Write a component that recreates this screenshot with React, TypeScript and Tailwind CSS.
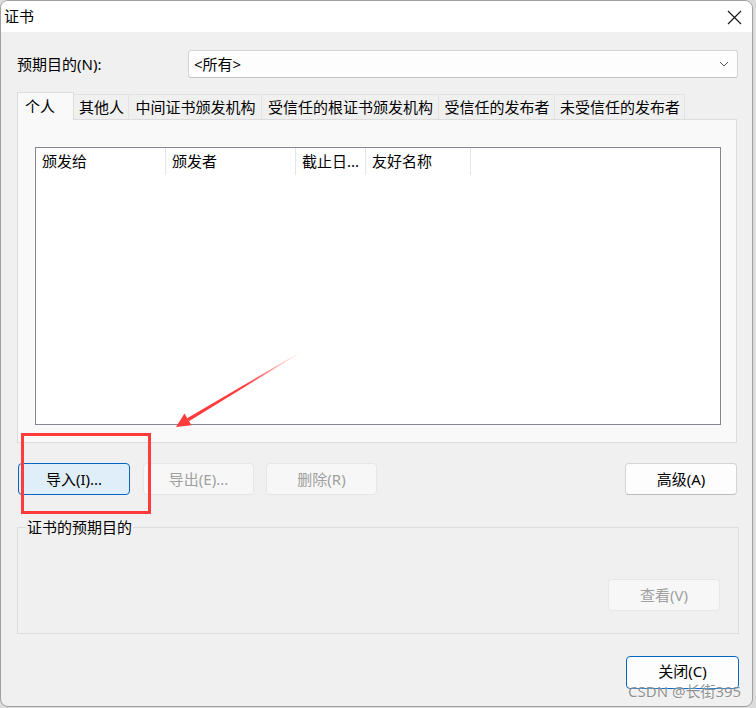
import React from "react";

const font = { fontFamily: '"Noto Sans", "Noto Sans CJK SC", sans-serif' };

function Tab({ label, w, active }: { label: string; w: number; active?: boolean }) {
  if (active) {
    return (
      <div
        className="relative z-10 -mb-px flex h-[28px] items-center border border-b-0 border-[#dcdcdc] bg-[#f9f9f9] pl-[7px] text-[15px] text-black"
        style={{ width: w }}
      >
        {label}
      </div>
    );
  }
  return (
    <div
      className="flex h-[25px] items-center justify-center border border-b-0 border-l-0 border-[#e3e3e3] bg-[#f0f0f0] pl-[1px] text-[15px] text-black"
      style={{ width: w }}
    >
      {label}
    </div>
  );
}

export default function App() {
  return (
    <div className="relative h-[708px] w-[756px] overflow-hidden bg-[#dcdcdc]" style={font}>
      <div className="flex h-[707px] w-[753px] flex-col overflow-hidden rounded-b-[8px] rounded-t-[8px] border border-[#a0a0a0] bg-[#f0f0f0]">
        {/* Title bar */}
        <div className="flex h-[31px] shrink-0 items-center justify-between bg-white pl-[3px] pr-[10px]">
          <span className="text-[15px] leading-none text-black">证书</span>
          <svg width="15" height="15" viewBox="0 0 15 15" className="mt-[1px]">
            <path d="M1 1 L14 14 M14 1 L1 14" stroke="#1a1a1a" strokeWidth="1.2" />
          </svg>
        </div>

        {/* Body */}
        <div className="flex flex-col pl-[16px]">
          {/* Purpose row */}
          <div className="mt-[18px] flex h-[28px] items-center">
            <div className="w-[171px] text-[15px] text-black">预期目的(N):</div>
            <div className="flex h-[28px] w-[550px] items-center justify-between rounded-[3px] border border-[#d4d4d4] border-b-[#c4c4c4] bg-[#fdfdfd] pl-[5px] pr-[8px] text-[15px] text-black">
              <span>&lt;所有&gt;</span>
              <svg width="10" height="6" viewBox="0 0 10 6">
                <path d="M1 1 L5 5 L9 1" fill="none" stroke="#555" strokeWidth="1" />
              </svg>
            </div>
          </div>

          {/* Tabs */}
          <div className="mt-[14px] flex h-[27px] items-end">
            <Tab label="个人" w={57} active />
            <Tab label="其他人" w={55} />
            <Tab label="中间证书颁发机构" w={133} />
            <Tab label="受信任的根证书颁发机构" w={177} />
            <Tab label="受信任的发布者" w={116} />
            <Tab label="未受信任的发布者" w={130} />
          </div>

          {/* Tab panel */}
          <div className="h-[324px] w-[720px] border border-[#dcdcdc] bg-[#f9f9f9]">
            <div className="ml-[17px] mt-[27px] h-[278px] w-[686px] border border-[#828790] bg-white">
              <div className="flex h-[27px] text-[15px] text-black">
                <div className="flex w-[130px] items-center border-r border-[#e5e5e5] pl-[6px]">颁发给</div>
                <div className="flex w-[130px] items-center border-r border-[#e5e5e5] pl-[6px]">颁发者</div>
                <div className="flex w-[70px] items-center border-r border-[#e5e5e5] pl-[6px]">截止日...</div>
                <div className="flex w-[105px] items-center border-r border-[#e5e5e5] pl-[6px]">友好名称</div>
              </div>
            </div>
          </div>

          {/* Buttons row */}
          <div className="mt-[20px] flex h-[32px] w-[721px] items-center text-[15px]">
            <div className="ml-[1px] flex h-[32px] w-[112px] items-center justify-center rounded-[4px] border border-[#0067c0] bg-[#e0eef9] text-black">
              导入(I)...
            </div>
            <div className="ml-[13px] flex h-[32px] w-[111px] items-center justify-center rounded-[4px] border border-[#e6e6e6] bg-[#f7f7f7] text-[#a0a0a0]">
              导出(E)...
            </div>
            <div className="ml-[12px] flex h-[32px] w-[111px] items-center justify-center rounded-[4px] border border-[#e6e6e6] bg-[#f7f7f7] text-[#a0a0a0]">
              删除(R)
            </div>
            <div className="ml-auto mr-[1px] flex h-[32px] w-[112px] items-center justify-center rounded-[4px] border border-[#d4d4d4] border-b-[#bdbdbd] bg-[#fdfdfd] text-black">
              高级(A)
            </div>
          </div>

          {/* Group box */}
          <div className="relative mt-[32px] h-[107px] w-[722px] border border-[#dcdcdc]">
            <div className="absolute left-[8px] top-[-11px] bg-[#f0f0f0] px-[1px] text-[15px] leading-[20px] text-black">
              证书的预期目的
            </div>
            <div className="flex justify-end pr-[18px] pt-[51px]">
              <div className="flex h-[32px] w-[112px] items-center justify-center rounded-[4px] border border-[#e6e6e6] bg-[#f7f7f7] text-[15px] text-[#a0a0a0]">
                查看(V)
              </div>
            </div>
          </div>

          {/* Close button */}
          <div className="mt-[22px] flex w-[722px] justify-end">
            <div className="flex h-[33px] w-[113px] items-center justify-center rounded-[4px] border border-[#0067c0] bg-[#fdfdfd] pb-[2px] text-[15px] text-black">
              关闭(C)
            </div>
          </div>
        </div>
      </div>

      {/* Annotation: red rectangle */}
      <div className="absolute left-[21px] top-[433px] h-[81px] w-[130px] border-[3px] border-[#ff3b3b]" />

      {/* Annotation: red arrow */}
      <svg className="pointer-events-none absolute left-0 top-0" width="756" height="708">
        <defs>
          <linearGradient id="ag" gradientUnits="userSpaceOnUse" x1="301" y1="352" x2="176" y2="427">
            <stop offset="0" stopColor="#ff3b3b" stopOpacity="0" />
            <stop offset="0.45" stopColor="#ff3b3b" stopOpacity="1" />
            <stop offset="1" stopColor="#ff3b3b" stopOpacity="1" />
          </linearGradient>
        </defs>
        <polygon points="301.2,352.3 300.8,351.7 187.1,418.3 188.9,421.3" fill="url(#ag)" />
        <polygon points="176,427 191.5,425.2 184.5,413.6" fill="#ff3b3b" />
      </svg>

      {/* Watermark */}
      <div
        className="absolute left-[628px] top-[682px] text-[15px] leading-[18px] text-[rgba(110,110,110,0.75)]"
        style={{ textShadow: "0 0 2px rgba(255,255,255,0.9)" }}
      >
        CSDN @长街395
      </div>
    </div>
  );
}
